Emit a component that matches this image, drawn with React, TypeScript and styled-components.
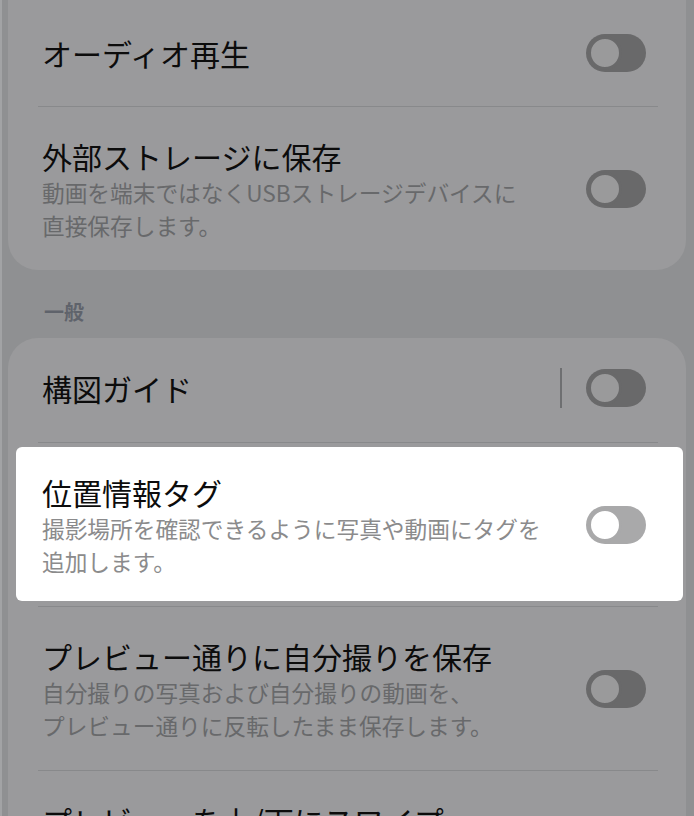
import React from "react";
import styled, { createGlobalStyle } from "styled-components";

const GlobalStyle = createGlobalStyle`
  html, body {
    margin: 0;
    padding: 0;
    background: #8f9092;
    overflow: hidden;
  }
  body {
    font-family: "Noto Sans CJK JP", "Noto Sans", sans-serif;
  }
`;

type Item = {
  title: string;
  desc?: string;
  divider?: boolean;
};

const topItems: Item[] = [
  { title: "オーディオ再生" },
  {
    title: "外部ストレージに保存",
    desc: "動画を端末ではなくUSBストレージデバイスに\n直接保存します。",
  },
];

function Toggle({ bright }: { bright?: boolean }) {
  return (
    <Track $bright={bright}>
      <Knob $bright={bright} />
    </Track>
  );
}

function Row({
  item,
  highlight,
  first,
}: {
  item: Item;
  highlight?: boolean;
  first?: boolean;
}) {
  return (
    <RowWrapper $highlight={highlight} $first={first} $multi={!!item.desc}>
      <TextBlock>
        <Title>{item.title}</Title>
        {item.desc && <Desc $bright={highlight}>{item.desc}</Desc>}
      </TextBlock>
      {item.divider && <VLine />}
      <Toggle bright={highlight} />
    </RowWrapper>
  );
}

export default function App() {
  return (
    <>
      <GlobalStyle />
      <Page>
        <Card $flatTop>
          <Row item={topItems[0]} first />
          <Divider />
          <Row item={topItems[1]} />
        </Card>
        <SectionHeader>一般</SectionHeader>
        <Card>
          <Row item={{ title: "構図ガイド", divider: true }} />
          <Divider />
          <Row
            highlight
            item={{
              title: "位置情報タグ",
              desc: "撮影場所を確認できるように写真や動画にタグを\n追加します。",
            }}
          />
          <Divider />
          <Row
            item={{
              title: "プレビュー通りに自分撮りを保存",
              desc: "自分撮りの写真および自分撮りの動画を、\nプレビュー通りに反転したまま保存します。",
            }}
          />
          <Divider />
          <Row
            item={{
              title: "プレビューを上/下にスワイプ",
              desc: "カメラを切り替えます。",
            }}
          />
        </Card>
      </Page>
    </>
  );
}

const Page = styled.div`
  height: 816px;
  overflow: hidden;
  background: #8f9092;
  border-left: 2px solid #a2a3a5;
  box-sizing: border-box;
`;

const Card = styled.section<{ $flatTop?: boolean }>`
  margin: 0 8px 0 6px;
  background: #9a9a9c;
  border-radius: ${(p) => (p.$flatTop ? "0 0 30px 30px" : "30px")};
  display: flex;
  flex-direction: column;
`;

const SectionHeader = styled.h3`
  margin: 0;
  padding: 28px 0 12px 42px;
  font-size: 20px;
  line-height: 28px;
  font-weight: 700;
  color: #5f636b;
`;

const RowWrapper = styled.div<{
  $highlight?: boolean;
  $first?: boolean;
  $multi?: boolean;
}>`
  display: flex;
  align-items: center;
  padding: ${(p) =>
    p.$first ? "33px 40px 33px 34px" : p.$multi ? "29px 40px 28px 34px" : "30px 40px 34px 34px"};

  ${(p) =>
    p.$highlight &&
    `
    background: #ffffff;
    border-radius: 6px;
    margin: 4px 3px 5px 8px;
    padding: 25px 37px 23px 26px;
  `}
`;

const TextBlock = styled.div`
  flex: 1;
  min-width: 0;
`;

const Title = styled.div`
  font-size: 30px;
  line-height: 40px;
  color: #0c0c0c;
  white-space: nowrap;
`;

const Desc = styled.div<{ $bright?: boolean }>`
  font-size: 22.7px;
  line-height: 33px;
  white-space: pre-line;
  color: ${(p) => (p.$bright ? "#8b8b8c" : "#68696b")};
`;

const Divider = styled.hr`
  margin: 0 28px 0 30px;
  border: none;
  height: 1px;
  background: #88898b;
`;

const VLine = styled.span`
  width: 2px;
  height: 40px;
  background: #6e6f71;
  margin-right: 24px;
`;

const Track = styled.span<{ $bright?: boolean }>`
  flex: none;
  position: relative;
  width: 60px;
  height: 38px;
  border-radius: 19px;
  background: ${(p) => (p.$bright ? "#a9a9aa" : "#69696a")};
`;

const Knob = styled.span<{ $bright?: boolean }>`
  position: absolute;
  left: 2px;
  top: 2px;
  width: 28px;
  height: 28px;
  border-radius: 50%;
  border: 3px solid ${(p) => (p.$bright ? "#a9a9aa" : "#69696a")};
  background: ${(p) => (p.$bright ? "#ffffff" : "#9a9a9b")};
`;
